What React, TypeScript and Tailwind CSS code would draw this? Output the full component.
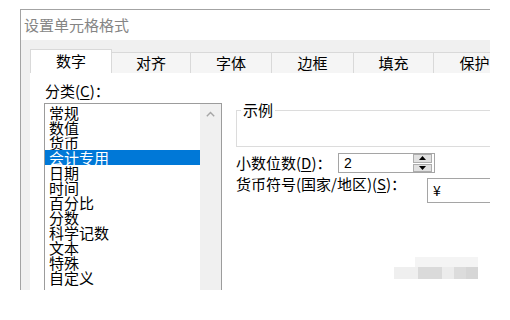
import React from 'react';

const categories = ['常规', '数值', '货币', '会计专用', '日期', '时间', '百分比', '分数', '科学记数', '文本', '特殊', '自定义'];
const tabs = ['数字', '对齐', '字体', '边框', '填充', '保护'];
const tabWidths = ['w-[82px]', 'w-[79px]', 'w-[81px]', 'w-[82px]', 'w-[80px]', 'w-[82px]'];

const cjk = "font-['Noto_Sans_CJK_SC','Noto_Sans',sans-serif]";

function SpinButtons() {
  return (
    <div className="ml-auto mr-[2px] flex h-[18px] w-[19px] flex-col gap-[1px]">
      <div className="flex h-[8.5px] items-center justify-center border border-[#adadad] bg-[#e1e1e1]">
        <svg width="7" height="4" viewBox="0 0 7 4"><path d="M3.5 0 L7 4 L0 4 Z" fill="#000" /></svg>
      </div>
      <div className="flex h-[8.5px] items-center justify-center border border-[#adadad] bg-[#e1e1e1]">
        <svg width="7" height="4" viewBox="0 0 7 4"><path d="M0 0 L7 0 L3.5 4 Z" fill="#000" /></svg>
      </div>
    </div>
  );
}

export default function App() {
  return (
    <div className={`relative h-[320px] w-[510px] overflow-hidden bg-white ${cjk}`}>
      {/* dialog, cut off on the right and bottom */}
      <div className="ml-[20px] mt-[9px] flex h-[281px] w-[470px] flex-col overflow-hidden border-l border-t border-[#a3a3a3]">
        <div className="h-[30px] bg-white pl-[3px] text-[15px] leading-[30px] text-[#858585]">设置单元格格式</div>

        <div className="flex flex-1 flex-col bg-[#f0f0f0] pl-[9px]">
          {/* tab strip */}
          <div className="flex h-[33px] items-end">
            {tabs.map((t, i) => (
              <div
                key={t}
                className={
                  i === 0
                    ? `flex h-[24px] shrink-0 items-center justify-center border-l border-r border-t border-[#d9d9d9] bg-white text-[15px] text-black ${tabWidths[i]}`
                    : `flex h-[21px] shrink-0 items-center justify-center border-r border-t border-[#d9d9d9] bg-[#f5f5f5] text-[15px] text-black ${tabWidths[i]}`
                }
              >
                {t}
              </div>
            ))}
          </div>

          {/* page content */}
          <div className="flex flex-1 bg-white pt-[9px]">
            <div className="ml-[14px] flex flex-col">
              <div className="h-[18px] pl-[1px] text-[15px] leading-[18px] text-black">
                分类(<span className="underline underline-offset-2">C</span>)：
              </div>
              <div className="mt-[3px] flex h-[190px] w-[178px] border-l border-r border-t border-[#9c9c9c]">
                <div className="flex flex-1 flex-col pt-[1px]">
                  {categories.map((c) => (
                    <div
                      key={c}
                      className={
                        c === '会计专用'
                          ? 'h-[15px] bg-[#0078d7] pl-[4px] text-[15px] leading-[15px] text-white'
                          : 'h-[15px] pl-[4px] text-[15px] leading-[15px] text-black'
                      }
                    >
                      {c}
                    </div>
                  ))}
                </div>
                <div className="flex w-[21px] justify-center bg-[#f0f0f0] pt-[7px]">
                  <svg width="9" height="6" viewBox="0 0 9 6">
                    <path d="M0.8 5.2 L4.5 1.5 L8.2 5.2" fill="none" stroke="#a6a6a6" strokeWidth="1.4" />
                  </svg>
                </div>
              </div>
            </div>

            <div className="ml-[14px] flex w-[270px] shrink-0 flex-col pt-[19px]">
              <fieldset className="h-[46px] w-[270px] border border-[#dcdcdc]">
                <legend className="ml-[4px] px-[2px] text-[15px] leading-[18px] text-black">示例</legend>
              </fieldset>

              <div className="mt-[6px] flex h-[20px] items-center">
                <div className="w-[102px] shrink-0 text-[15px] leading-[16px] text-black">
                  小数位数(<span className="underline underline-offset-2">D</span>)：
                </div>
                <div className="flex h-[20px] w-[97px] items-center border border-[#a5a5a5] bg-white">
                  <span className="pl-[5px] font-['Liberation_Sans',sans-serif] text-[14px] text-black">2</span>
                  <SpinButtons />
                </div>
              </div>

              <div className="mt-[5px] flex h-[25px] items-start">
                <div className="-mt-[2px] w-[191px] shrink-0 text-[15px] leading-[16px] text-black">
                  货币符号(国家/地区)(<span className="underline underline-offset-2">S</span>)：
                </div>
                <div className="flex h-[25px] w-[80px] items-center border border-[#a5a5a5] bg-white pl-[5px] text-[14px] text-black">
                  ¥
                </div>
              </div>
            </div>
          </div>
        </div>
      </div>

      {/* blurred watermark */}
      <div className="absolute left-[394px] top-[257px] flex flex-col">
        <div className="ml-[21px] h-[10px] w-[63px] bg-[#f4f4f4]" />
        <div className="flex h-[12px]">
          <div className="w-[24px] bg-[#efefef]" />
          <div className="w-[24px] bg-[#dadada]" />
          <div className="w-[12px] bg-[#ececec]" />
          <div className="w-[12px] bg-[#dcdcdc]" />
          <div className="w-[12px] bg-[#d6d6d6]" />
        </div>
      </div>
    </div>
  );
}
